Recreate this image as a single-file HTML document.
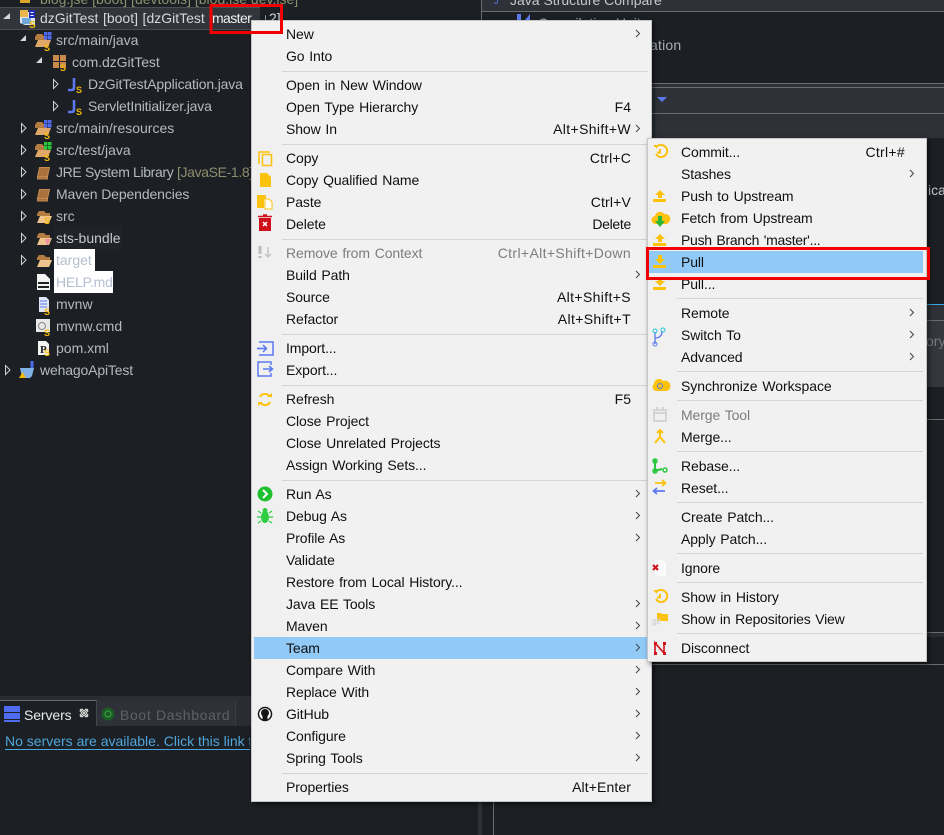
<!DOCTYPE html>
<html lang="en"><head><meta charset="utf-8"><title>Eclipse Team menu</title>
<style>
html,body{margin:0;padding:0;background:#1c1f23}
#p{position:relative;width:944px;height:835px;overflow:hidden;background:#1c1f23;font:14px/22px "Liberation Sans","Noto Sans CJK KR",sans-serif;color:#b4bac0}
#p div,#p span.a{position:absolute}
.t{white-space:nowrap;height:22px}
.b{background:#2e3238}
.l{background:#6a6d70}
.m{background:#f1f1f1;border:1px solid #c6c6c6;box-shadow:2px 2px 5px rgba(0,0,0,.55)}
.k{color:#101010;white-space:nowrap;height:22px;letter-spacing:-.1px;word-spacing:1px}
.k.d{color:#7d7d7d}
.r{color:#101010;white-space:nowrap;height:22px;text-align:right;letter-spacing:.36px}
.r.d{color:#7d7d7d}
.s{background:#d4d4d4;height:1px}
.g{color:#8d8f6e}
</style></head><body>
<div id="p">
<!-- right side panels -->
<div class="b" style="left:481px;top:0;width:463px;height:11px"></div>
<div class="l" style="left:481px;top:11px;width:463px;height:1px"></div>
<div class="l" style="left:481px;top:0;width:1px;height:138px"></div>
<div class="t" style="left:510px;top:-11px;color:#c4c8cc">Java Structure Compare</div>
<div class="t" style="left:538px;top:12px;color:#a9afb5">Compilation Unit</div>
<div class="t" style="left:650px;top:34px;color:#a9afb5;letter-spacing:.2px">ation</div>
<div class="l" style="left:481px;top:83px;width:463px;height:1px"></div>
<div class="b" style="left:481px;top:84px;width:463px;height:3px"></div>
<div class="l" style="left:481px;top:87px;width:463px;height:1px"></div>
<div class="b" style="left:481px;top:88px;width:463px;height:25px"></div>
<div class="l" style="left:481px;top:113px;width:463px;height:1px"></div>
<div class="b" style="left:481px;top:114px;width:463px;height:24px"></div>
<div class="t" style="left:928px;top:179px;color:#c4c8cc">ica</div>
<div style="left:652px;top:304px;width:292px;height:1px;background:#37a5e6"></div>
<div class="b" style="left:652px;top:305px;width:292px;height:15px"></div>
<div class="l" style="left:652px;top:320px;width:292px;height:1px"></div>
<div style="left:652px;top:321px;width:292px;height:66px;background:#34383d"></div>
<div class="t" style="left:926px;top:330px;color:#777b80">ory</div>
<div class="l" style="left:652px;top:419px;width:292px;height:1px"></div>
<div class="l" style="left:652px;top:632px;width:292px;height:1px"></div>
<div style="left:652px;top:633px;width:292px;height:4px;background:#2a2d32"></div>
<div class="l" style="left:652px;top:664px;width:292px;height:1px"></div>
<div class="b" style="left:478px;top:660px;width:4px;height:175px"></div>
<div class="l" style="left:493px;top:660px;width:1px;height:175px"></div>

<!-- project tree -->
<div style="left:0;top:7px;width:260px;height:21px;background:#32363c;border-top:1px solid #4a4e53;border-bottom:1px solid #4a4e53"></div>
<div class="t" style="left:40px;top:-12px;color:#8d8f6e">blog.jse [boot] [devtools] [blog.jse dev.jse]</div>
<div class="t" style="left:40px;top:7px;color:#d4d8dc;word-spacing:.7px">dzGitTest [boot] [dzGitTest</div>
<div class="t" style="left:212px;top:7px;color:#f0f0f0;letter-spacing:-.6px">master</div>
<div class="t" style="left:262px;top:7px;color:#d4d8dc">↓2]</div>
<div class="t" style="left:56px;top:29px">src/main/java</div>
<div class="t" style="left:72px;top:51px;letter-spacing:-.08px">com.dzGitTest</div>
<div class="t" style="left:88px;top:73px;letter-spacing:-.16px">DzGitTestApplication.java</div>
<div class="t" style="left:88px;top:95px;letter-spacing:-.17px">ServletInitializer.java</div>
<div class="t" style="left:56px;top:117px">src/main/resources</div>
<div class="t" style="left:56px;top:139px">src/test/java</div>
<div class="t" style="left:56px;top:161px;letter-spacing:-.35px">JRE System Library <span class="g">[JavaSE-1.8]</span></div>
<div class="t" style="left:56px;top:183px;letter-spacing:-.12px">Maven Dependencies</div>
<div class="t" style="left:56px;top:205px">src</div>
<div style="left:54px;top:227px;width:68px;height:22px;background:#202327"></div>
<div class="t" style="left:56px;top:227px;color:#c4cad0">sts-bundle</div>
<div style="left:54px;top:249px;width:41px;height:22px;background:#fff"></div>
<div class="t" style="left:56px;top:249px;color:#b3bfd0">target</div>
<div style="left:54px;top:271px;width:59px;height:22px;background:#fff"></div>
<div class="t" style="left:56px;top:271px;color:#b3bfd0;letter-spacing:-.2px">HELP.md</div>
<div class="t" style="left:56px;top:293px">mvnw</div>
<div class="t" style="left:56px;top:315px">mvnw.cmd</div>
<div class="t" style="left:56px;top:337px">pom.xml</div>
<div class="t" style="left:40px;top:359px;letter-spacing:-.15px">wehagoApiTest</div>

<!-- servers panel -->
<div style="left:0;top:696px;width:260px;height:4px;background:#2a2d32"></div>
<div style="left:0;top:700px;width:260px;height:26px;background:#2a2d32"></div>
<div style="left:0;top:700px;width:97px;height:26px;background:#1c1f23;border-top:1px solid #6a6d70;border-right:1px solid #44474b;box-sizing:border-box"></div>
<div style="left:97px;top:701px;width:139px;height:25px;background:#2e3238;border-right:1px solid #3a3d42;box-sizing:border-box"></div>
<div class="t" style="left:24px;top:704px;color:#e6e8ea;letter-spacing:-.1px">Servers</div>
<div class="t" style="left:120px;top:704px;color:#5d6166;letter-spacing:.65px">Boot Dashboard</div>
<div class="t" style="left:5px;top:730px;color:#4ea6dc;border-bottom:1px solid #4ea6dc;height:19px;line-height:22px;width:245px;overflow:hidden">No servers are available. Click this link to create a new server...</div>

<!-- main menu -->
<div class="m" style="left:251px;top:20px;width:399px;height:780px"></div>
<div style="left:252px;top:21px;width:30px;height:778px;background:#f0f0f0"></div>
<div style="left:254px;top:637px;width:394px;height:22px;background:#91c9f7"></div>
<div class="s" style="left:282px;top:71px;width:366px"></div>
<div class="s" style="left:282px;top:144px;width:366px"></div>
<div class="s" style="left:282px;top:239px;width:366px"></div>
<div class="s" style="left:282px;top:334px;width:366px"></div>
<div class="s" style="left:282px;top:385px;width:366px"></div>
<div class="s" style="left:282px;top:480px;width:366px"></div>
<div class="s" style="left:282px;top:773px;width:366px"></div>

<div class="k" style="left:286px;top:23px">New</div>
<div class="k" style="left:286px;top:45px">Go Into</div>
<div class="k" style="left:286px;top:74px">Open in New Window</div>
<div class="k" style="left:286px;top:96px">Open Type Hierarchy</div>
<div class="k" style="left:286px;top:118px">Show In</div>
<div class="k" style="left:286px;top:147px">Copy</div>
<div class="k" style="left:286px;top:169px">Copy Qualified Name</div>
<div class="k" style="left:286px;top:191px">Paste</div>
<div class="k" style="left:286px;top:213px">Delete</div>
<div class="k d" style="left:286px;top:242px">Remove from Context</div>
<div class="k" style="left:286px;top:264px">Build Path</div>
<div class="k" style="left:286px;top:286px">Source</div>
<div class="k" style="left:286px;top:308px">Refactor</div>
<div class="k" style="left:286px;top:337px">Import...</div>
<div class="k" style="left:286px;top:359px">Export...</div>
<div class="k" style="left:286px;top:388px">Refresh</div>
<div class="k" style="left:286px;top:410px">Close Project</div>
<div class="k" style="left:286px;top:432px">Close Unrelated Projects</div>
<div class="k" style="left:286px;top:454px">Assign Working Sets...</div>
<div class="k" style="left:286px;top:483px">Run As</div>
<div class="k" style="left:286px;top:505px">Debug As</div>
<div class="k" style="left:286px;top:527px">Profile As</div>
<div class="k" style="left:286px;top:549px">Validate</div>
<div class="k" style="left:286px;top:571px">Restore from Local History...</div>
<div class="k" style="left:286px;top:593px">Java EE Tools</div>
<div class="k" style="left:286px;top:615px">Maven</div>
<div class="k" style="left:286px;top:637px">Team</div>
<div class="k" style="left:286px;top:659px">Compare With</div>
<div class="k" style="left:286px;top:681px">Replace With</div>
<div class="k" style="left:286px;top:703px">GitHub</div>
<div class="k" style="left:286px;top:725px">Configure</div>
<div class="k" style="left:286px;top:747px">Spring Tools</div>
<div class="k" style="left:286px;top:776px">Properties</div>

<div class="r" style="right:313px;top:96px;letter-spacing:0">F4</div>
<div class="r" style="right:313px;top:118px">Alt+Shift+W</div>
<div class="r" style="right:313px;top:147px;letter-spacing:.17px">Ctrl+C</div>
<div class="r" style="right:313px;top:191px;letter-spacing:.17px">Ctrl+V</div>
<div class="r" style="right:313px;top:213px;letter-spacing:-.3px">Delete</div>
<div class="r d" style="right:313px;top:242px">Ctrl+Alt+Shift+Down</div>
<div class="r" style="right:313px;top:286px">Alt+Shift+S</div>
<div class="r" style="right:313px;top:308px">Alt+Shift+T</div>
<div class="r" style="right:313px;top:388px;letter-spacing:0">F5</div>
<div class="r" style="right:313px;top:776px;letter-spacing:.1px">Alt+Enter</div>

<!-- Team submenu -->
<div class="m" style="left:647px;top:138px;width:278px;height:522px"></div>
<div style="left:648px;top:139px;width:29px;height:520px;background:#f0f0f0"></div>
<div style="left:649px;top:251px;width:274px;height:22px;background:#91c9f7"></div>
<div class="s" style="left:677px;top:298px;width:246px"></div>
<div class="s" style="left:677px;top:371px;width:246px"></div>
<div class="s" style="left:677px;top:400px;width:246px"></div>
<div class="s" style="left:677px;top:451px;width:246px"></div>
<div class="s" style="left:677px;top:502px;width:246px"></div>
<div class="s" style="left:677px;top:553px;width:246px"></div>
<div class="s" style="left:677px;top:582px;width:246px"></div>
<div class="s" style="left:677px;top:633px;width:246px"></div>

<div class="k" style="left:681px;top:141px">Commit...</div>
<div class="r" style="right:39px;top:141px;letter-spacing:.3px">Ctrl+#</div>
<div class="k" style="left:681px;top:163px">Stashes</div>
<div class="k" style="left:681px;top:185px">Push to Upstream</div>
<div class="k" style="left:681px;top:207px">Fetch from Upstream</div>
<div class="k" style="left:681px;top:229px;letter-spacing:-.28px">Push Branch 'master'...</div>
<div class="k" style="left:681px;top:251px">Pull</div>
<div class="k" style="left:681px;top:273px">Pull...</div>
<div class="k" style="left:681px;top:302px">Remote</div>
<div class="k" style="left:681px;top:324px">Switch To</div>
<div class="k" style="left:681px;top:346px">Advanced</div>
<div class="k" style="left:681px;top:375px;letter-spacing:-.05px">Synchronize Workspace</div>
<div class="k d" style="left:681px;top:404px">Merge Tool</div>
<div class="k" style="left:681px;top:426px">Merge...</div>
<div class="k" style="left:681px;top:455px">Rebase...</div>
<div class="k" style="left:681px;top:477px">Reset...</div>
<div class="k" style="left:681px;top:506px">Create Patch...</div>
<div class="k" style="left:681px;top:528px">Apply Patch...</div>
<div class="k" style="left:681px;top:557px">Ignore</div>
<div class="k" style="left:681px;top:586px">Show in History</div>
<div class="k" style="left:681px;top:608px;letter-spacing:-.2px">Show in Repositories View</div>
<div class="k" style="left:681px;top:637px">Disconnect</div>

<!-- icon overlay -->
<svg width="944" height="835" viewBox="0 0 944 835" style="position:absolute;left:0;top:0" fill="none">
<!-- tree expanders -->
<g fill="#d8d8d8"><path d="M3 19l7-6v6zM20 41l6-6v6zM36 63l6-6v6z"/></g>
<g stroke="#d0d0d0"><path d="M53.500 79.500v9l4.500-4.500zM53.500 101.500v9l4.500-4.500zM21.500 123.500v9l4.500-4.500zM21.500 145.500v9l4.500-4.500zM21.500 167.500v9l4.500-4.500zM21.500 189.500v9l4.500-4.500zM21.500 211.500v9l4.500-4.500zM21.500 233.500v9l4.500-4.500zM21.500 255.500v9l4.500-4.500zM5.500 365.500v9l4.500-4.500z"/></g>
<!-- top cut row -->
<path d="M20 0h10v3H20z" fill="#d9a62a"/><text x="494" y="4" font-family="Liberation Sans" font-size="9" fill="#5b78ec">J</text>
<path d="M517 14h4v6h-4zM525 20l5-6v6z" fill="#5b78ec"/>
<!-- root project -->
<path d="M20 12h15v13H25l-5-2z" fill="#dfe6ee"/>
<path d="M20 10h8v7h-8z" fill="#e8b64c"/><path d="M29 10h6v8h-6z" fill="#1e2bb8"/><path d="M30.500 12h3v1h-3zM30.500 15h3v1h-3z" fill="#fff"/>
<path d="M22 18h9v6h-9z" fill="#6fa8dc"/>
<text x="29" y="28" font-family="Liberation Sans" font-size="10" font-weight="bold" fill="#f1b90c">S</text>
<!-- src folders -->
<path d="M35 37l2-3h5l2 2h3v4H35z" fill="#b37c43"/><path d="M35 47l3-7h13l-3 7z" fill="#e0a868"/>
<g fill="#4f6cf0"><rect x="44" y="32" width="3.500" height="3.500"/><rect x="48" y="32" width="3.500" height="3.500"/><rect x="44" y="36" width="3.500" height="3.500"/><rect x="48" y="36" width="3.500" height="3.500"/></g>
<path d="M35 125l2-3h5l2 2h3v4H35z" fill="#b37c43"/><path d="M35 135l3-7h13l-3 7z" fill="#e0a868"/>
<g fill="#4f6cf0"><rect x="44" y="120" width="3.500" height="3.500"/><rect x="48" y="120" width="3.500" height="3.500"/><rect x="44" y="124" width="3.500" height="3.500"/><rect x="48" y="124" width="3.500" height="3.500"/></g>
<path d="M35 147l2-3h5l2 2h3v4H35z" fill="#b37c43"/><path d="M35 157l3-7h13l-3 7z" fill="#e0a868"/>
<g fill="#27c93a"><rect x="44" y="142" width="3.500" height="3.500"/><rect x="48" y="142" width="3.500" height="3.500"/><rect x="44" y="146" width="3.500" height="3.500"/><rect x="48" y="146" width="3.500" height="3.500"/></g>
<!-- package -->
<g fill="#c98a4b"><rect x="53" y="55" width="6" height="6"/><rect x="60" y="55" width="6" height="6"/><rect x="53" y="62" width="6" height="6"/><rect x="60" y="62" width="6" height="6"/></g>
<!-- J icons -->
<g stroke="#5b78ec" stroke-width="2.600"><path d="M74 78v9.500q0 2.500-2.500 2.500H68M74 100v9.500q0 2.500-2.500 2.500H68"/></g>
<!-- libraries -->
<path d="M39.500 167.500h10l-2 9h-10zM37.500 176.500h10v2.500h-10z" fill="#a8713d" stroke="#c48a50"/><path d="M39.500 189.500h10l-2 9h-10zM37.500 198.500h10v2.500h-10z" fill="#a8713d" stroke="#c48a50"/>
<!-- plain folders -->
<path d="M37 214l2-3h5l2 2h4v3H37z" fill="#b37c43"/><path d="M37 223l3-7h12l-3 7z" fill="#efc48d"/>
<path d="M37 236l2-3h5l2 2h4v3H37z" fill="#b37c43"/><path d="M37 245l3-7h12l-3 7z" fill="#efc48d"/>
<path d="M37 258l2-3h5l2 2h4v3H37z" fill="#b37c43"/><path d="M37 267l3-7h12l-3 7z" fill="#efc48d"/>
<path d="M45 239h6l-2 3-1 3h-1z" fill="#ef8fa0"/>
<!-- files -->
<path d="M37 274h8l5 5v11H37z" fill="#f4f4f4"/><path d="M38 282h11v2H38zM38 286h11v2H38z" fill="#222"/>
<path d="M39 297h7l3 3v12H39z" fill="#dfe6f5"/><path d="M40 301h7M40 304h7M40 307h7" stroke="#5b78ec"/>
<rect x="36" y="319" width="14" height="13" fill="#e8e8e8"/><circle cx="42" cy="326" r="3.500" stroke="#888"/>
<path d="M38 341h8l3 3v11H38z" fill="#f4f4f4"/><text x="40" y="353" font-family="Liberation Serif" font-size="11" font-weight="bold" fill="#222">P</text>
<g font-family="Liberation Sans" font-size="9" font-weight="bold" fill="#f1b90c"><text x="44" y="51">S</text><text x="60" y="71">S</text><text x="76" y="93">S</text><text x="76" y="115">S</text><text x="44" y="139">S</text><text x="44" y="161">S</text><text x="44" y="224">S</text><text x="44" y="315">S</text><text x="44" y="336">S</text><text x="44" y="356">S</text></g>
<!-- wehago -->
<path d="M20 368h14l-2 8-2 2h-8z" fill="#7fb1e8"/><path d="M32 361v7" stroke="#4f6cf0" stroke-width="3"/><path d="M19 378l3.500-6 3.500 6z" fill="#f1b90c"/>
<!-- servers tab -->
<g fill="#4f6cf0"><rect x="4" y="706" width="16" height="6"/><rect x="4" y="713" width="16" height="6"/><rect x="4" y="720" width="16" height="2"/></g>
<path d="M80 709l8 8M88 709l-8 8" stroke="#d8d8d8" stroke-width="1"/><path d="M80 711l2-2 2 2 2-2 2 2-2 2 2 2-2 2-2-2-2 2-2-2 2-2z" stroke="#d8d8d8"/>
<circle cx="108" cy="714" r="6.500" fill="#1b5c24"/><circle cx="108" cy="714" r="3" stroke="#3da54c"/>
<!-- blue dropdown -->
<path d="M657 97h10l-5 5z" fill="#5b78f0"/>
<!-- main menu icons -->
<g stroke="#fcc20c" stroke-width="1.500"><path d="M270 152h-11v12"/><rect x="262.500" y="154.500" width="9" height="11"/></g>
<path d="M260 173h7l4 4v10h-11z" fill="#fcc20c"/>
<path d="M257 195h9v4h-2v9h-7z" fill="#fcc20c"/><path d="M265 199h4l3 3v7h-7z" fill="#fff" stroke="#fcc20c"/>
<path d="M259 218h12v13h-12z" fill="#d0101a"/><path d="M258 216.500h14M263 215h4" stroke="#d0101a" stroke-width="1.500"/><path d="M263 222l4 4M267 222l-4 4" stroke="#fff" stroke-width="1.500"/>
<path d="M260 246v8M260 256v2" stroke="#bcbcbc" stroke-width="3"/><path d="M268 247v10M265 254l3 3 3-3" stroke="#c4c4c4" stroke-width="1.500"/>
<g stroke="#5b78f0" stroke-width="1.500"><path d="M259 342h14v13h-14M263 348.500h-6"/><path d="M257 348.500h9M263 345l3.500 3.500-3.500 3.500"/></g>
<g stroke="#5b78f0" stroke-width="1.500"><path d="M271 365v-3h-13v14h13v-3"/><path d="M263 369h9M269 366l3.500 3-3.500 3"/></g>
<g stroke="#fcc20c" stroke-width="2"><path d="M260 397q1-3 5-3 3 0 4 2M270 402q-1 3-5 3-3 0-4-2"/></g><path d="M267 397h5v-4zM263 402h-5v4z" fill="#fcc20c"/>
<circle cx="265" cy="494" r="7.500" fill="#1fc02e"/><path d="M263 490l4 4-4 4" stroke="#fff" stroke-width="2"/>
<g fill="#2ecc40"><ellipse cx="265" cy="517" rx="4" ry="6"/><circle cx="265" cy="510.500" r="2.500"/></g><path d="M258 511l3 2M272 511l-3 2M257 517h4M273 517h-4M258 523l3-2M272 523l-3-2" stroke="#2ecc40" stroke-width="1.300"/>
<circle cx="265" cy="714" r="6.500" stroke="#151515" stroke-width="1.500" fill="#fff"/><circle cx="265" cy="713" r="4" fill="#151515"/><path d="M262.500 716h5v4h-5z" fill="#151515"/>
<!-- submenu arrows -->
<g stroke="#444" transform="translate(0,1)"><path d="M636 29l3.500 3.500-3.500 3.500M636 124l3.500 3.500-3.500 3.500M636 270l3.500 3.500-3.500 3.500M636 489l3.500 3.500-3.500 3.500M636 511l3.500 3.500-3.500 3.500M636 533l3.500 3.500-3.500 3.500M636 599l3.500 3.500-3.500 3.500M636 621l3.500 3.500-3.500 3.500M636 643l3.500 3.500-3.500 3.500M636 665l3.500 3.500-3.500 3.500M636 687l3.500 3.500-3.500 3.500M636 709l3.500 3.500-3.500 3.500M636 731l3.500 3.500-3.500 3.500M636 753l3.500 3.500-3.500 3.500"/></g>
<g stroke="#444"><path d="M910 170l3.500 3.500-3.500 3.500M910 309l3.500 3.500-3.500 3.500M910 331l3.500 3.500-3.500 3.500M910 353l3.500 3.500-3.500 3.500"/></g>
<!-- team icons -->
<g stroke="#fcc20c" stroke-width="2"><path d="M656 147q2-2 5-2a6 6 0 1 1-5 9"/><path d="M660 149v3.500h-3"/></g><path d="M653 145h4v4z" fill="#fcc20c"/>
<g fill="#fcc20c"><path d="M660 190l5 5h-3v3h-4v-3h-3zM653 199h13v3h-13z"/><path d="M660 234l5 5h-3v3h-4v-3h-3zM653 243h13v3h-13z"/><path d="M658 255h4v4h3l-5 5-5-5h3zM653 265h13v3h-13z"/><path d="M658 277h4v4h3l-5 5-5-5h3zM653 287h13v3h-13z"/></g>
<path d="M656 224a4 4 0 0 1-1-8 5 5 0 0 1 9-2 5 5 0 0 1 4 9l-1 1z" fill="#fcc20c"/><path d="M658 216h4v5h3l-5 6-5-6h3z" fill="#28b83a"/>
<g stroke="#5b78f0" stroke-width="1.300"><path d="M655 332v12M655 338q7 0 7-7"/></g><circle cx="655" cy="331" r="2" stroke="#25c6dc"/><circle cx="663" cy="330" r="2" stroke="#25c6dc"/><circle cx="655" cy="344" r="2" stroke="#5b78f0"/>
<path d="M656 391a4 4 0 0 1-2-7 5 5 0 0 1 9-3 5 5 0 0 1 4 10z" fill="#fcc20c"/><circle cx="660" cy="386" r="2.500" stroke="#5b78f0"/>
<g stroke="#d4d4d4" stroke-width="2"><rect x="654" y="410" width="12" height="11"/><path d="M654 413h12"/></g><path d="M657 407v3M663 407v3" stroke="#d4d4d4" stroke-width="2"/>
<path d="M660 431v6l-5 6M660 437l5 6M657 433l3-3 3 3" stroke="#fcc20c" stroke-width="2"/>
<path d="M655 459v12q0 0 3-1l4-1M655 461v9" stroke="#28c83c" stroke-width="2"/><circle cx="655" cy="461" r="2" stroke="#28c83c" stroke-width="1.500"/><circle cx="655" cy="471" r="2" stroke="#28c83c" stroke-width="1.500"/><circle cx="665" cy="470" r="2" stroke="#28c83c" stroke-width="1.500"/>
<path d="M655 483h10M662 480l3.500 3-3.500 3" stroke="#fcc20c" stroke-width="1.700"/><path d="M665 491h-11M657 488l-3.500 3 3.500 3" stroke="#5b78f0" stroke-width="1.700"/>
<path d="M655 560h8l3 3v13h-11z" fill="#fbfbfb"/><path d="M653 565l5 5M658 565l-5 5" stroke="#d0101a" stroke-width="2"/>
<g stroke="#fcc20c" stroke-width="2"><path d="M656 592q2-2 5-2a6 6 0 1 1-5 9"/><path d="M660 594v3.500h-3"/></g><path d="M653 590h4v4z" fill="#fcc20c"/>
<path d="M657 613h4l1 1h6v7h-11z" fill="#fcc20c"/><text x="652" y="624" font-family="Liberation Sans" font-size="8" fill="#fff" stroke="#bbb" stroke-width=".3">git</text>
<path d="M655 653v-10l9 10v-10" stroke="#d0101a" stroke-width="1.600"/><g fill="#d0101a"><rect x="654" y="642" width="3" height="3"/><rect x="663" y="642" width="3" height="3"/><rect x="654" y="652" width="3" height="3"/><rect x="663" y="652" width="3" height="3"/></g>
<!-- red annotation rectangles -->
<rect x="211" y="5.500" width="70.500" height="27" stroke="#f00000" stroke-width="3"/>
<rect x="647.500" y="248.500" width="281" height="30" stroke="#f00000" stroke-width="3"/>
</svg>
</div>
</body></html>
